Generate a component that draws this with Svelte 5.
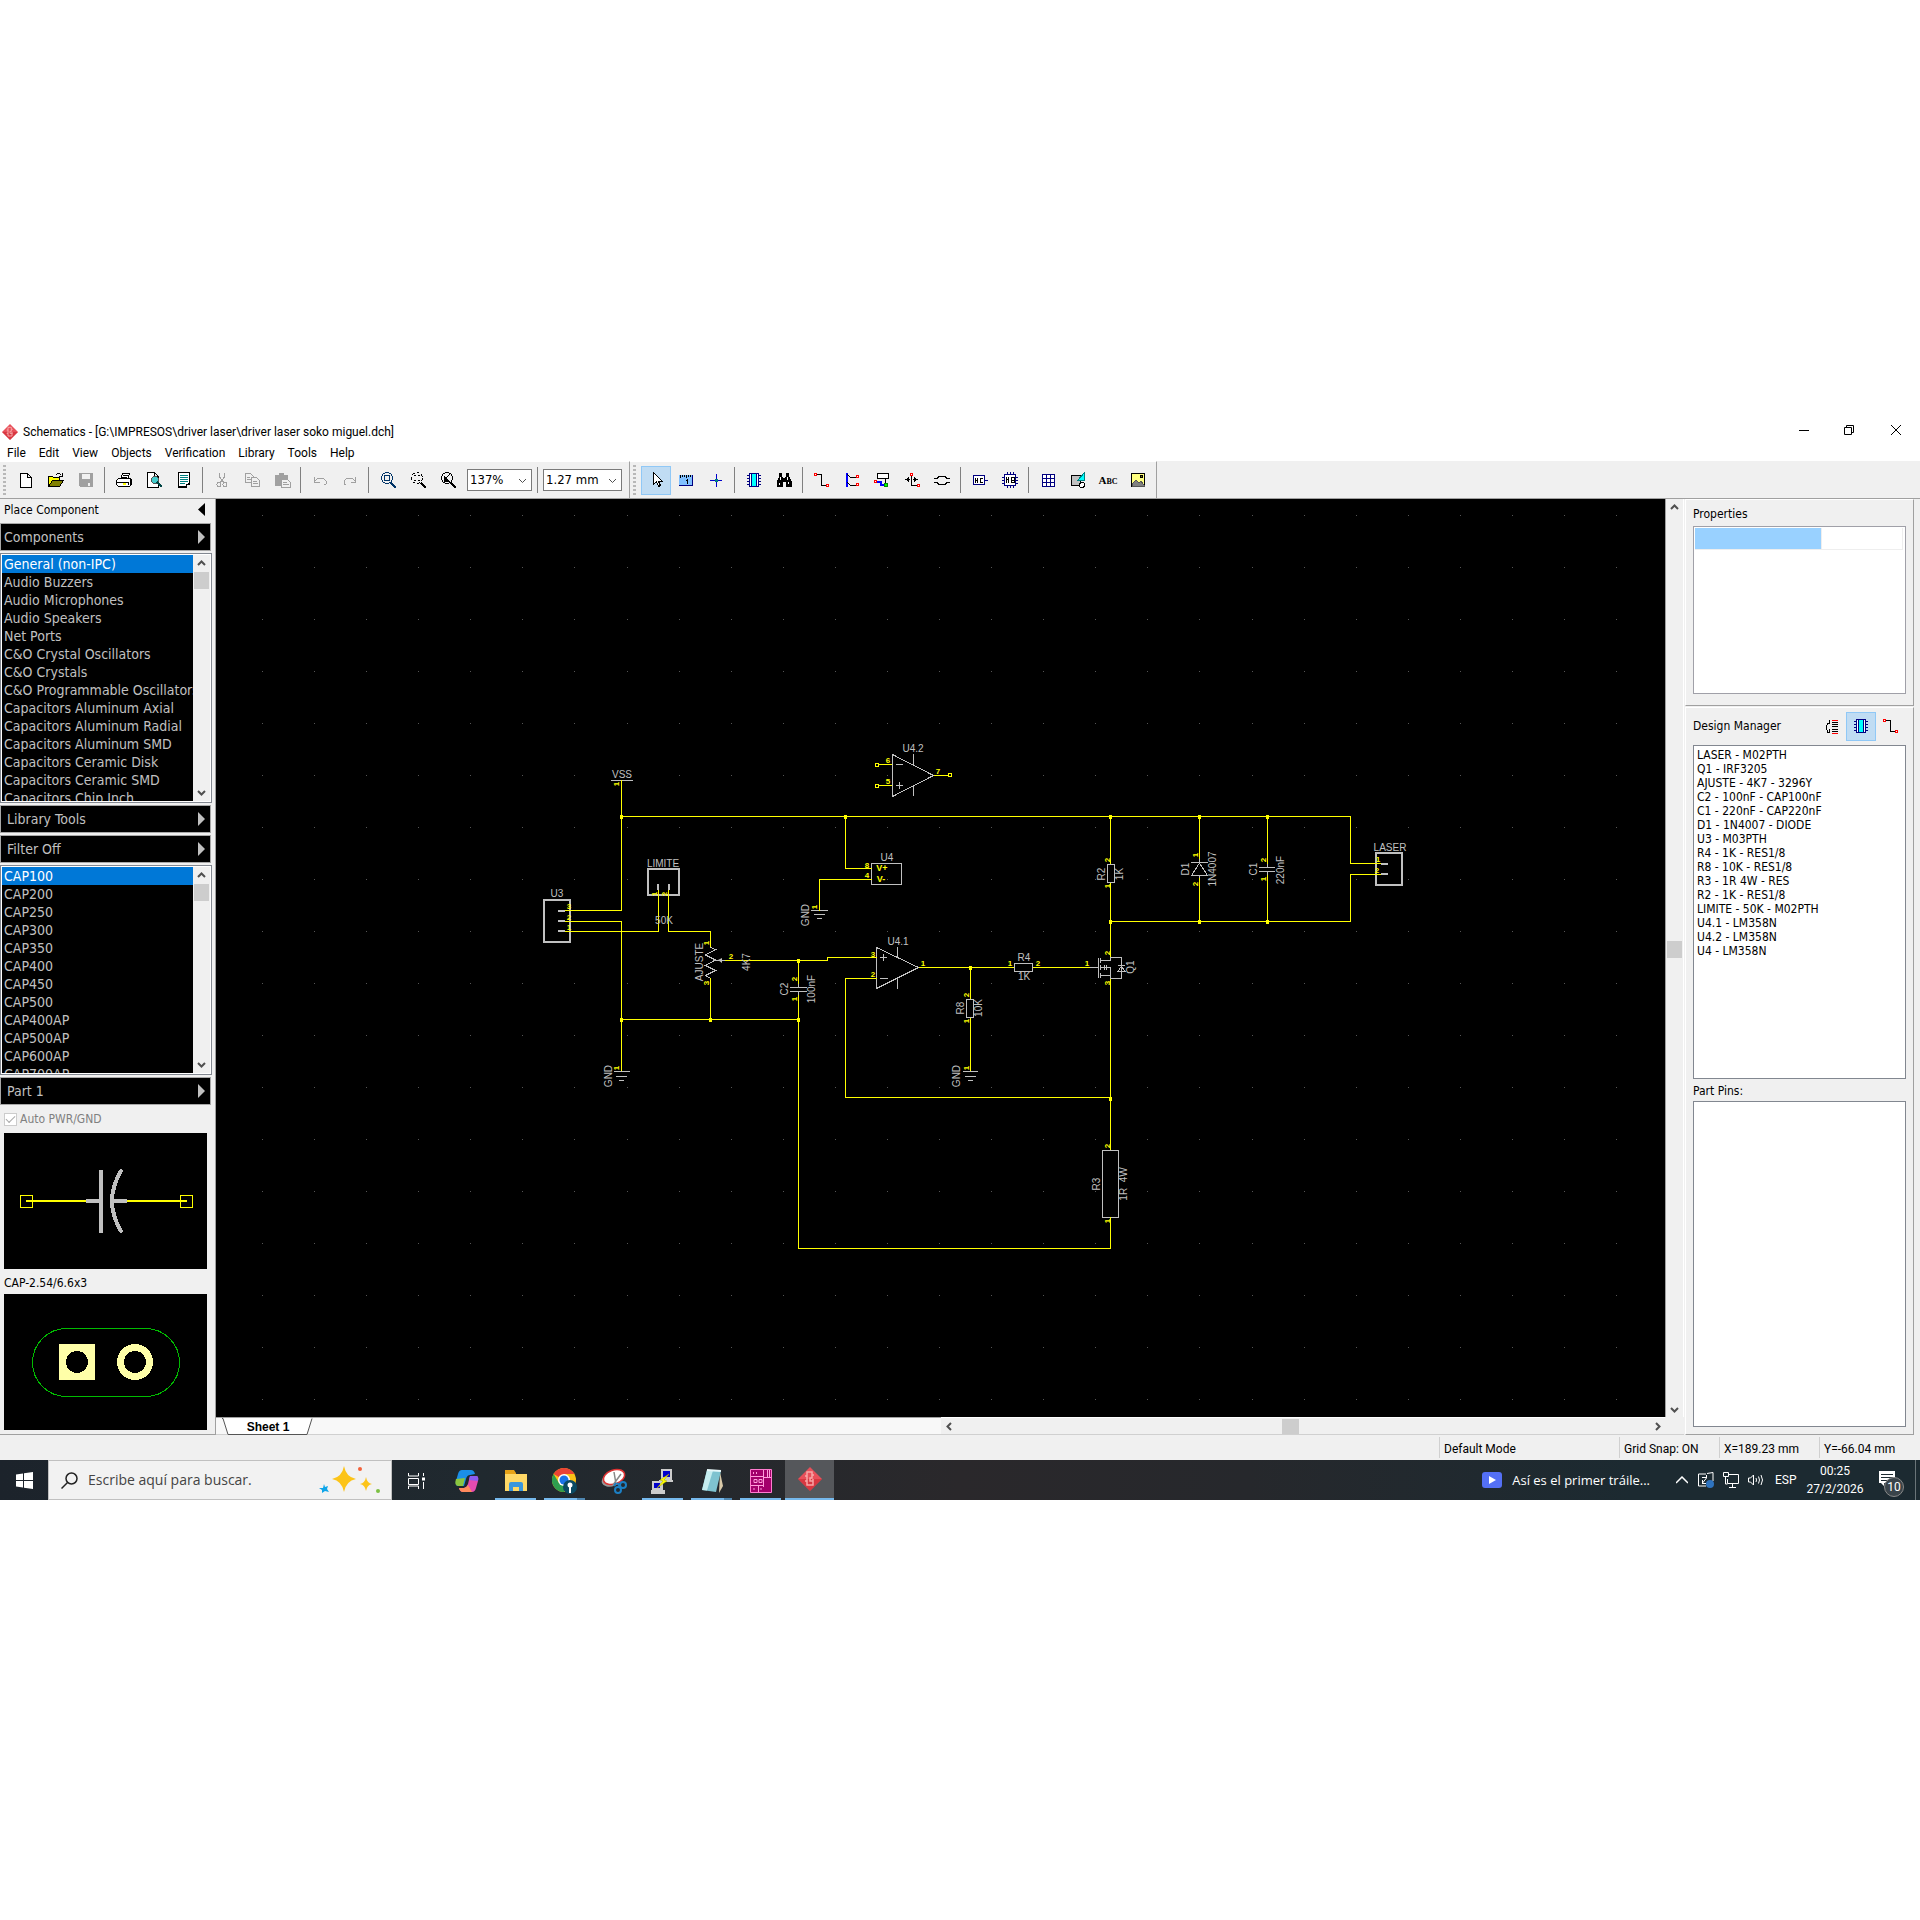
<script>
  const menus = ['File', 'Edit', 'View', 'Objects', 'Verification', 'Library', 'Tools', 'Help'];
  const libraries = [
    'General (non-IPC)', 'Audio Buzzers', 'Audio Microphones', 'Audio Speakers', 'Net Ports',
    'C&O Crystal Oscillators', 'C&O Crystals', 'C&O Programmable Oscillators',
    'Capacitors Aluminum Axial', 'Capacitors Aluminum Radial', 'Capacitors Aluminum SMD',
    'Capacitors Ceramic Disk', 'Capacitors Ceramic SMD', 'Capacitors Chip Inch'
  ];
  const components = [
    'CAP100', 'CAP200', 'CAP250', 'CAP300', 'CAP350', 'CAP400', 'CAP450', 'CAP500',
    'CAP400AP', 'CAP500AP', 'CAP600AP', 'CAP700AP'
  ];
  const parts = [
    'LASER - M02PTH', 'Q1 - IRF3205', 'AJUSTE - 4K7 - 3296Y', 'C2 - 100nF - CAP100nF',
    'C1 - 220nF - CAP220nF', 'D1 - 1N4007 - DIODE', 'U3 - M03PTH', 'R4 - 1K - RES1/8',
    'R8 - 10K - RES1/8', 'R3 - 1R 4W - RES', 'R2 - 1K - RES1/8', 'LIMITE - 50K - M02PTH',
    'U4.1 - LM358N', 'U4.2 - LM358N', 'U4 - LM358N'
  ];
  const tools = [
    ['new', 'open', 'save'], ['print', 'preview', 'report'], ['cut', 'copy', 'paste'],
    ['undo', 'redo'], ['zoomwin', 'zoomobj', 'zoomprev']
  ];
  const objectTools = [
    ['pointer', 'ruler', 'origin'], ['chip', 'find'], ['wire', 'bus', 'buscon', 'netport', 'hier'],
    ['hcon', 'hblock'], ['table', 'shape', 'text', 'picture']
  ];
  const apps = [
    { id: 'tasks' }, { id: 'copilot' }, { id: 'explorer', open: true },
    { id: 'chrome', open: true, multi: true }, { id: 'snip' }, { id: 'putty', open: true },
    { id: 'notepad', open: true, multi: true }, { id: 'pcb', open: true }, { id: 'schematic', active: true }
  ];

  const dots = [];
  for (let i = 0; i < 27; i++)
    for (let j = 0; j < 18; j++) dots.push(`M${262 + Math.round(i * 52.08)} ${515 + j * 52}h1v1h-1z`);
  const dotPath = dots.join('');

  const wires =
    'M621.5 780V910.5H565 M621.5 816.5H1350.5V863.5H1381 M845.5 816.5V868.5H871.5 M871.5 879.5H819.5V910.5' +
    'M658.5 890V931.5H565 M668.5 890V931.5H710.5V947 M565 921.5H621.5V1071 M621.5 1019.5H798.5' +
    'M710.5 978V1019.5 M725 960.5H827.5V957.5H876.5 M798.5 960V984 M798.5 995V1248.5H1110.5V1217' +
    'M876.5 978.5H845.5V1097.5H1110.5 M918.5 967.5H1014 M970.5 967V999 M970.5 1018V1071 M1033 967.5H1090' +
    'M1110.5 816V864 M1110.5 883V957 M1110.5 979V1150 M1110.5 921.5H1350.5V874.5H1381' +
    'M1199.5 816V859 M1199.5 878V921 M1267.5 816V864 M1267.5 875V921' +
    'M879 764.5H892 M879 785.5H892 M934 775.5H948 M875.5 763.5h3v3h-3z M875.5 784.5h3v3h-3z M948.5 773.5h3v3h-3z';
  const nodes = [
    [621, 816], [845, 816], [1110, 816], [1199, 816], [1267, 816], [621, 1019], [710, 1019], [798, 1019],
    [798, 960], [970, 967], [1110, 921], [1199, 921], [1267, 921], [1110, 1098]
  ];
  const symbols =
    'M611 780.5H633 M871.5 863.5H901.5V884.5H871.5z M811 910.5H828 M814 914.5H825 M817 918.5H822' +
    'M614 1071.5H630 M616 1076.5H627 M619 1080.5H624 M963 1071.5H978 M965 1076.5H976 M968 1080.5H973' +
    'M790 987.5H807 M790 991.5H807 M798.5 984V987 M798.5 992V995' +
    'M880 957.5H887 M883.5 954V961 M880 978.5H888 M897.5 947V957 M897.5 978V989' +
    'M896 764.5H903 M896 785.5H903 M899.5 782V789 M913.5 754V765 M913.5 786V796' +
    'M966.5 999.5H973.5V1017.5H966.5z M1014.5 963.5H1032.5V971.5H1014.5z M1107.5 864.5H1114.5V882.5H1107.5z' +
    'M1102.5 1150.5H1118.5V1217.5H1102.5z M1259 867.5H1275 M1259 871.5H1275 M1267.5 864V867 M1267.5 872V875' +
    'M1191 862.5H1208 M1199.5 859V862 M1199.5 876V878' +
    'M1090 967.5H1098 M1098.5 958V978 M1100.5 958V963 M1100.5 965V970 M1100.5 973V978 M1100 960.5H1110.5V957.5H1121.5V978.5H1110.5V967.5H1100 M1100 975.5H1110' +
    'M1118 965.5H1125 M1104.5 965V970 M1106.5 965V970';
  const slants =
    'M876.5 947.5L918.5 967.5L876.5 988.5z M892.5 754.5L933.5 775.5L892.5 796.5z' +
    'M1199.5 863L1191.5 875.5H1207.5z M1121.5 966L1118 971.5H1125z' +
    'M710.5 947.5L715.5 949.5L705.5 955L715.5 960L705.5 965.5L715.5 970.5L705.5 975.5L710.5 978.5 M713 960.5H725';
  const thick =
    'M648 869H679V895H648z M544 900H570V942H544z M1376 853H1402V885H1376z' +
    'M658 884V890 M669 884V890 M558 911H565 M558 921H565 M558 931H565 M1381 864H1388 M1381 874H1388';

  // x, baseline, text
  const names = [
    [622, 778, 'VSS'], [913, 752, 'U4.2'], [887, 861, 'U4'], [663, 867, 'LIMITE'], [557, 897, 'U3'],
    [664, 924, '50K'], [898, 945, 'U4.1'], [1024, 961, 'R4'], [1024, 980, '1K'], [1390, 851, 'LASER']
  ];
  const sideNames = [
    [809, 915, 'GND'], [612, 1076, 'GND'], [960, 1076, 'GND'], [703, 962, 'AJUSTE'], [750, 962, '4K7'],
    [788, 989, 'C2'], [815, 989, '100nF'], [964, 1008, 'R8'], [982, 1008, '10K'], [1105, 874, 'R2'],
    [1123, 874, '1K'], [1189, 869, 'D1'], [1216, 869, '1N4007'], [1257, 869, 'C1'], [1284, 870, '220nF'],
    [1134, 967, 'Q1'], [1100, 1184, 'R3'], [1127, 1184, '1R  4W']
  ];
  const pins = [
    [867, 868, '8'], [867, 878, '4'], [569, 909, '3'], [569, 920, '2'], [569, 930, '1'], [731, 959, '2'],
    [873, 957, '3'], [873, 977, '2'], [923, 966, '1'], [888, 763, '6'], [888, 784, '5'], [938, 774, '7'],
    [1010, 966, '1'], [1038, 966, '2'], [1087, 966, '1'], [1378, 862, '1'], [1377, 873, '2']
  ];
  const sidePins = [
    [619, 784, '1'], [619, 1068, '1'], [817, 907, '1'], [657, 894, '1'], [667, 894, '2'], [709, 943, '1'],
    [709, 983, '3'], [797, 979, '2'], [797, 999, '1'], [969, 995, '2'], [969, 1021, '1'], [969, 1068, '1'],
    [1110, 860, '2'], [1110, 886, '1'], [1110, 953, '2'], [1110, 983, '3'], [1110, 1146, '2'],
    [1110, 1221, '1'], [1198, 855, '1'], [1198, 884, '2'], [1266, 860, '2'], [1266, 879, '1']
  ];
</script>

{#snippet icon(id)}
  <svg class="icon" viewBox="0 0 18 18" width="18" height="18" shape-rendering="crispEdges" fill="none" stroke="#000" aria-hidden="true">
    {#if id === 'new'}
      <path fill="#fff" d="M3.5 2.5h7l4 4v10h-11z M10.5 2.5v4h4" />
    {:else if id === 'open'}
      <path fill="#ff0" d="M1.5 15.5v-10h4l1 1h6v3" /><path fill="#808000" d="M1.5 15.5l4-6h11l-4 6z" /><path d="M9 3.5h1M10 2.5h3M13 3.5h1M15.5 2v4M12 5.5h4" />
    {:else if id === 'save'}
      <path stroke="none" fill="#a0a0a0" d="M2 2h14v14H3l-1-1z" /><path stroke="none" fill="#f0f0f0" d="M5 3h8v5H5zM11 12h2v3h-2z" />
    {:else if id === 'print'}
      <path fill="#fff" d="M5.5 8.5l2-6h7l-2 6z M8 4.5h5M7 6.5h5" /><path fill="#fff" d="M1.5 9.5l2-2h12l1 1v5l-2 2h-11l-2-2z M2 11.5h12M13 14v-3M15 8v6" /><path stroke="#ff0" stroke-width="2" d="M8 13h3" />
    {:else if id === 'preview'}
      <path fill="#fff" d="M2.5 1.5h7l4 4v11h-11z M9.5 1.5v4h4" /><circle cx="10" cy="9" r="3.5" fill="#4cc" stroke="#555" /><path stroke="#044" stroke-width="2" d="M12 11l5 5" />
    {:else if id === 'report'}
      <path fill="#fff" d="M3.5 1.5h11v12h-3v3h-8z" /><path stroke="#008080" d="M5 4.5h8M5 6.5h8M5 8.5h8M5 10.5h8M5 12.5h5" stroke-width="1" /><path d="M3 15.5h8M14 12v2" stroke-width="2" />
    {:else if id === 'cut'}
      <path stroke="#a0a0a0" d="M6.500 2v4l4 5M11.500 2v4l-4 5" /><circle cx="6" cy="13.500" r="2" stroke="#a0a0a0" /><circle cx="12" cy="13.500" r="2" stroke="#a0a0a0" />
    {:else if id === 'copy'}
      <path stroke="#a0a0a0" d="M2.500 2.500h5l3 3v6h-8zM4 6.500h3M4 8.500h4" /><path stroke="#a0a0a0" fill="#f0f0f0" d="M8.500 6.500h5l3 3v6h-8zM10 10.500h4M10 12.500h5" />
    {:else if id === 'paste'}
      <path fill="#a0a0a0" stroke="none" d="M2 4h4V2h5v2h4v11H2z" /><path fill="#f0f0f0" stroke="#a0a0a0" d="M8.500 8.500h6l3 3v5h-9zM10 11.500h4M10 13.500h6" />
    {:else if id === 'undo'}
      <path stroke="#a0a0a0" d="M3.500 6v5h5M4 10l3-3h5l3 3v3l-2 1" />
    {:else if id === 'redo'}
      <path stroke="#a0a0a0" d="M14.500 6v5h-5M14 10l-3-3H6L3 10v3l2 1" />
    {:else if id.startsWith('zoom')}
      <circle cx="8" cy="7" r="5.500" stroke={id === 'zoomwin' ? '#036' : '#000'} stroke-dasharray={id === 'zoomobj' ? '3 2' : 'none'} />
      <path stroke={id === 'zoomwin' ? '#036' : '#000'} stroke-width="2" d="M12 12l5 5" />
      {#if id === 'zoomwin'}<path d="M5.500 4.500h5v5h-5z" stroke="#036" />{/if}
      {#if id === 'zoomobj'}<path d="M5 4.500h2M9 4.500h2M5 9.500h2M9 9.500h2" />{/if}
      {#if id === 'zoomprev'}<path fill="#000" d="M5 10V5l5 5zM7 7l5-5" />{/if}
    {:else if id === 'pointer'}
      <path fill="#fff" d="M6.500 1.500v12l3-3 2 5 2-1-2-4h4z" />
    {:else if id === 'ruler'}
      <path fill="#80c0ff" stroke="none" d="M2 4h14v11H2z" /><path stroke="#000080" d="M2 14.500h14M15.500 4v11" /><path d="M3.500 4v3M5.500 4v2M7.500 4v2M9.500 4v3M11.500 4v2M13.500 4v2M10.500 8v5M9 9.500h2" />
    {:else if id === 'origin'}
      <path stroke="#00c" d="M3 9.500h12M9.500 3v13" /><path fill="#008080" stroke="none" d="M8 8h3v3H8z" />
    {:else if id === 'chip'}
      <path stroke="#000080" d="M2 4.500h14M2 7.500h14M2 10.500h14M2 13.500h14" /><path fill="#fff" stroke="#000080" d="M4.500 2.500h9v13h-9z" /><path stroke="none" fill="#0ff" d="M7 3h4v12H7z" /><path stroke="#000080" d="M6.500 3v12M11.500 3v12" />
    {:else if id === 'find'}
      <path fill="#000" d="M4.500 2.500h2v3l2 2h1l2-2v-3h2v3l3 5v5h-5v-5h-4v5h-5v-5l2-5z" /><path stroke="#fff" d="M5.500 6v3M12.500 6v3M4 11.500v2M13.500 11v2" />
    {:else if id === 'wire'}
      <path d="M4 3.500h4.500v11H14" /><path stroke="red" d="M1.500 2.500h2v2h-2zM13.500 13.500h2v2h-2z" fill="#fff" />
    {:else if id === 'bus'}
      <path stroke="#00f" stroke-width="2" d="M4 2v14" /><path d="M4 3l3 3h7M4 11l3 3h7" /><path stroke="red" fill="#fff" d="M13.500 4.500h2v2h-2zM13.500 12.500h2v2h-2z" />
    {:else if id === 'buscon'}
      <path fill="#fff" d="M4.500 2.500h11v5h-11zM12.500 8v5" /><path stroke="#00f" stroke-width="2" d="M4 11h4v3h4" /><path stroke="red" fill="#fff" d="M1.500 9.500h2v2h-2z" /><circle cx="13" cy="14" r="2" fill="#0f0" stroke="#080" />
    {:else if id === 'netport'}
      <path d="M8.500 5v9.500H14M2 8.500h5M10 8.500h5M5.500 6v5M11.500 6v5M4.500 7v3M12.500 7v3" /><path stroke="red" fill="#fff" d="M7.500 2.500h2v2h-2zM14.500 13.500h2v2h-2z" />
    {:else if id === 'hier'}
      <path d="M1 7.500h3M1 11.500h3M14 7.500h3M14 11.500h3M4 7.500l2-2h6l2 2M4 11.500l2 2h6l2-2" />
    {:else if id === 'hcon'}
      <path fill="#fff" stroke="#000080" d="M2.500 4.500h11v9h-11zM14 9.500h3" /><path d="M4.500 7v5M6.500 7v5M4 9.500h3M9.500 7v5M10 7.500h2M10 11.500h2" />
    {:else if id === 'hblock'}
      <path stroke="#000080" d="M6.500 1v16M9.500 1v16M12.500 1v16M1 6.500h16M1 9.500h16M1 12.500h16" /><path fill="#fff" stroke="#000080" d="M3.500 3.500h11v11h-11z" /><path d="M5.500 6v6M7.500 6v6M5 8.500h3M10.500 6v6M10 6.500h3v5h-3M10 9.500h3" />
    {:else if id === 'table'}
      <path fill="#fff" stroke="#000080" d="M3.500 3.500h12v12h-12zM3 7.500h13M3 11.500h13M7.500 3v13M11.500 3v13" />
    {:else if id === 'shape'}
      <path fill="#c0c0c0" d="M2.500 4.500h9v10h-9z" /><path fill="#0ff" stroke="#008080" d="M15.500 1.500v8h-7z" /><circle cx="13" cy="14" r="2.500" fill="#fff" />
    {:else if id === 'picture'}
      <path fill="#ffff80" d="M2.500 2.500h13v13h-13z" /><path fill="#808080" stroke="#555" d="M3 15v-2l4-4 3 3 2-2 3 4v1z" /><path fill="#808000" d="M11.500 4.500h2v2h-2z" />
    {:else if id === 'refresh'}
      <path d="M10 5.500h6M10 7.500h6M10 9.500h6M10 12.500h6M10 14.500h6M7.500 3v4M5 6.500h3M5.500 6v2M4.500 8v5M5.500 13v2M5 15.500h3M7.500 12v4" /><path stroke="red" d="M10 3.500h6M10 16.500h6" />
    {/if}
  </svg>
{/snippet}

{#snippet toolButton(id, active)}
  <button class="tool" class:active aria-label={id}>
    {#if id === 'text'}<span class="abc">Abc</span>{:else}{@render icon(id)}{/if}
  </button>
{/snippet}

{#snippet chevron(dir)}
  <svg class="chev {dir}" viewBox="0 0 9 9" width="9" height="9" aria-hidden="true"><path d="M1 6l3.500-3.500L8 6" fill="none" stroke="#505050" /></svg>
{/snippet}

{#snippet logo(size)}
  <svg viewBox="0 0 24 24" width={size} height={size} aria-hidden="true">
    <path d="M12 0L24 12L12 24L0 12z" fill="#e8505a" /><path d="M0 12h24L12 24z" fill="#c81e28" opacity=".5" />
    <path d="M9 5h5v6h-2v3h3v4H9zM9 9h-2M9 14H7M14 8h2M15 12v3" fill="none" stroke="#f7a5a5" stroke-width="1.500" />
  </svg>
{/snippet}

{#snippet listBox(items, label)}
  <div class="listbox">
    <ul aria-label={label}>
      {#each items as item, i}<li class:selected={i === 0}>{item}</li>{/each}
    </ul>
    <div class="vbar">{@render chevron('up')}<span class="thumb"></span><span class="fill"></span>{@render chevron('down')}</div>
  </div>
{/snippet}

<div class="window">
  <header class="titlebar">
    {@render logo(16)}
    <h1>Schematics - [G:\IMPRESOS\driver laser\driver laser soko miguel.dch]</h1>
    <div class="winbtns">
      <button aria-label="Minimize"><svg width="12" height="12"><path d="M1 6.500h10" stroke="#000" /></svg></button>
      <button aria-label="Restore"><svg width="12" height="12" fill="none" stroke="#000"><path d="M1.500 3.500h7v7h-7zM3.500 3.500v-2h7v7h-2" /></svg></button>
      <button aria-label="Close"><svg width="12" height="12"><path d="M1 1l10 10M11 1L1 11" stroke="#000" /></svg></button>
    </div>
  </header>
  <nav class="menubar">{#each menus as m}<button>{m}</button>{/each}</nav>

  <div class="toolbars">
    <div class="toolbar">
      <span class="grip"></span>
      {#each tools as group, i}
        {#if i}<span class="sep"></span>{/if}
        {#each group as t}{@render toolButton(t, false)}{/each}
      {/each}
      <label class="combo zoom"><select aria-label="Zoom"><option>137%</option></select>{@render chevron('down')}</label>
      <span class="sep"></span>
      <label class="combo grid"><select aria-label="Grid"><option>1.27 mm</option></select>{@render chevron('down')}</label>
    </div>
    <div class="toolbar">
      <span class="grip"></span>
      {#each objectTools as group, i}
        {#if i}<span class="sep"></span>{/if}
        {#each group as t}{@render toolButton(t, t === 'pointer')}{/each}
      {/each}
    </div>
  </div>

  <main class="work">
    <aside class="left">
      <div class="place"><span>Place Component</span><svg width="7" height="13"><path d="M7 0v13L0 6.500z" /></svg></div>
      <button class="bar first"><span>Components</span><i></i></button>
      {@render listBox(libraries, 'Libraries')}
      <button class="bar"><span>Library Tools</span><i></i></button>
      <button class="bar"><span>Filter Off</span><i></i></button>
      <div class="short">{@render listBox(components, 'Components')}</div>
      <button class="bar"><span>Part 1</span><i></i></button>
      <label class="check"><input type="checkbox" checked disabled /><span>Auto PWR/GND</span></label>
      <svg class="preview" viewBox="4 1133 203 136" fill="none" shape-rendering="crispEdges" role="img" aria-label="Symbol">
        <path stroke="#ff0" d="M20.500 1195.500h12v12h-12zM180.500 1195.500h12v12h-12z" />
        <path stroke="#ff0" stroke-width="2" d="M26 1201h61M126 1201h61" />
        <path stroke="silver" stroke-width="4" d="M86 1201h15M112 1201h15M101 1170v63" />
        <path stroke="silver" stroke-width="4" stroke-linecap="round" d="M121 1171q-18 30 0 60" />
      </svg>
      <p class="package">CAP-2.54/6.6x3</p>
      <svg class="preview" viewBox="4 1294 203 136" shape-rendering="crispEdges" role="img" aria-label="Pattern">
        <rect x="32.500" y="1328.500" width="147" height="68" rx="34" fill="none" stroke="#0b0" />
        <path fill="#ffffa8" d="M59 1344h36v36H59z" /><circle cx="135" cy="1362" r="18" fill="#ffffa8" />
        <circle cx="77" cy="1362" r="11" /><circle cx="135" cy="1362" r="11" />
      </svg>
    </aside>

    <section class="center">
      <div class="viewport">
        <svg class="sheet" role="img" aria-label="Schematic">
          <g transform="translate(-216 -499)">
            <path d={dotPath} fill="#555" shape-rendering="crispEdges" />
            <g fill="none" stroke="silver">
              <path d={symbols} shape-rendering="crispEdges" />
              <path d={slants} shape-rendering="crispEdges" />
              <path d={thick} stroke-width="2" shape-rendering="crispEdges" />
            </g>
            <path d={wires} fill="none" stroke="#ff0" shape-rendering="crispEdges" />
            <path d="M718 960l4-2v5z" fill="silver" />
            {#each nodes as [x, y]}<rect x={x - 1} y={y - 1} width="3" height="4" fill="#ff0" />{/each}
            {#each names as [x, y, t]}<text {x} {y}>{t}</text>{/each}
            {#each sideNames as [x, y, t]}<text {x} {y} transform="rotate(-90 {x} {y})">{t}</text>{/each}
            {#each pins as [x, y, t]}<text class="pin" {x} {y}>{t}</text>{/each}
            {#each sidePins as [x, y, t]}<text class="pin" {x} {y} transform="rotate(-90 {x} {y})">{t}</text>{/each}
            <text class="volt" x="882" y="871">V+</text>
            <text class="volt" x="881" y="882">V-</text>
          </g>
        </svg>
        <div class="vbar main">{@render chevron('up')}<span class="fill"></span><span class="thumb"></span><span class="fill low"></span>{@render chevron('down')}</div>
      </div>
      <div class="bottom">
        <div class="tabs">
          <button class="tab"><svg width="92" height="18" aria-hidden="true"><path d="M0 .5h1l5 16h79l5-16" fill="#fff" stroke="#555" /></svg><span>Sheet 1</span></button>
        </div>
        <div class="hbar">{@render chevron('left')}<span class="fill"></span><span class="thumb"></span><span class="fill low"></span>{@render chevron('right')}</div>
      </div>
    </section>

    <aside class="right">
      <section class="props">
        <h2>Properties</h2>
        <div class="box"><div class="row"><span></span><span></span></div></div>
      </section>
      <section class="manager">
        <div class="head"><h2>Design Manager</h2>{@render toolButton('refresh', false)}{@render toolButton('chip', true)}{@render toolButton('wire', false)}</div>
        <ul class="box">{#each parts as p}<li>{p}</li>{/each}</ul>
        <h2 class="pinhead">Part Pins:</h2>
        <div class="box pinbox"></div>
      </section>
    </aside>
  </main>

  <footer class="status">
    <span class="mode">Default Mode</span><span>Grid Snap: ON</span><span>X=189.23 mm</span><span>Y=-66.04 mm</span>
  </footer>

  <div class="taskbar">
    <button class="start" aria-label="Start"><svg width="17" height="17" fill="#fff"><path d="M0 2.500l7-1V8H0zM8 1.300L17 0v8H8zM0 9h7v6.500l-7-1zM8 9h9v8l-9-1.300z" /></svg></button>
    <label class="search">
      <svg width="17" height="17" fill="none" stroke="#222" stroke-width="1.500"><circle cx="10.500" cy="6.500" r="5.500" /><path d="M6.500 10.500L.5 16.500" /></svg>
      <input aria-label="Buscar" placeholder="Escribe aquí para buscar." />
      <svg width="66" height="28" viewBox="0 0 66 28"><path fill="#fcc419" d="M28 0q2 11 12 13-10 2-12 13-2-11-12-13 10-2 12-13z" /><path fill="#fcc419" d="M50 11q1 6 6 7-5 1-6 7-1-6-6-7 5-1 6-7z" /><path fill="#0ea5e9" d="M8 18l1 3 3-1-1 3 2 3-4-1-3 2v-3l-3-2h4z" /><circle cx="44" cy="3" r="2" fill="#f4623a" /><circle cx="62" cy="25" r="2" fill="#7bc043" /></svg>
    </label>
    <div class="apps">
      {#each apps as a}
        <button class:open={a.open} class:multi={a.multi} class:current={a.active} aria-label={a.id}>
          {#if a.id === 'schematic'}{@render logo(24)}{:else}
          <svg width="26" height="26" viewBox="0 0 26 26" fill="none" aria-hidden="true">
            {#if a.id === 'tasks'}
              <path stroke="#fff" d="M3.500 5v3h10V5M3.500 10.500h10v6h-10zM3.500 21v-3h10v3M18.500 5v3M18.500 14v7" /><path fill="#fff" d="M17 9.500h3v3h-3z" />
            {:else if a.id === 'copilot'}
              <path fill="#1a8fe8" d="M8 2h9q3 0 4 4l-5 1q-3 0-4 4l-2 7H4q-3 0-2-5l2-7q1-4 4-4z" /><path fill="#8bc53f" d="M2 11l9-1-2 8H4q-4-1-2-7z" /><path fill="#e54bb0" d="M18 24H9q-3 0-4-4h5q3-1 4-4l2-8h6q3 0 2 5l-2 7q-1 4-4 4z" /><path fill="#ff8a5c" d="M18 24H9q-3 0-4-4h5q3-1 4-3z" /><path fill="#8c5cf0" d="M16 8h6q3 0 2 5l-9-1z" />
            {:else if a.id === 'explorer'}
              <path fill="#e8a317" d="M2 2h9l2 3v4H2z" /><path fill="#ffd866" d="M2 6h22v17H2z" /><path fill="#3a96dd" d="M6 23v-7q0-2 2-2h10q2 0 2 2v7h-4v-4h-6v4z" />
            {:else if a.id === 'chrome'}
              <circle cx="12" cy="12" r="12" fill="#fbc116" /><path fill="#ea4335" d="M12 12L1.600 6A12 12 0 0 1 22.400 6H12z" /><path fill="#2e9e4f" d="M1.600 6A12 12 0 0 0 12 24l5-9-10 0z" /><circle cx="12" cy="12" r="6" fill="#fff" /><circle cx="12" cy="12" r="4.500" fill="#1a73e8" /><circle cx="18" cy="19" r="7" fill="#0b4a63" /><circle cx="18" cy="17" r="2.500" fill="#fff" /><path stroke="#fff" stroke-width="2" d="M18 18v7" />
            {:else if a.id === 'snip'}
              <ellipse cx="12" cy="11" rx="11" ry="7" transform="rotate(-20 12 13)" fill="#999" /><ellipse cx="13" cy="9" rx="11" ry="7" transform="rotate(-20 13 9)" fill="#fff" stroke="#d33" stroke-width="1.500" /><path stroke="#888" d="M13 4l2 12M20 6l-8 11" stroke-width="1.500" /><path stroke="#1c7fc4" stroke-width="2" d="M15 15l-2 3M16 15l3 3" /><circle cx="17" cy="22" r="3" stroke="#1c7fc4" stroke-width="2" /><circle cx="22" cy="17" r="3" stroke="#1c7fc4" stroke-width="2" />
            {:else if a.id === 'putty'}
              <path fill="#ccc" d="M11 1h11v11H11zM9 12h14v2H9zM2 13h11v9H2zM1 22h14v4H1z" /><path fill="#00c" d="M13 3h7v6h-7zM4 15h6v5H4z" /><path fill="#ff0" stroke="#aa0" stroke-width=".5" d="M19 6l-9 6 3 1-6 7 10-7-3-1z" />
            {:else if a.id === 'notepad'}
              <path fill="#d9c9a8" d="M21 4l3 14-4 7z" /><path fill="#7fc3d0" d="M8 2l14 1-5 21-14-2z" /><path fill="#c5edf0" d="M8 2l6 .5-6 20-5-.5z" /><path stroke="#e8f8fa" d="M8 2l14 1" stroke-width="2" />
            {:else if a.id === 'pcb'}
              <path fill="#a3006b" stroke="#ff7ccf" d="M2.500 1.500h21v23h-21z" /><path stroke="#ff9ddb" d="M3 8.500h13M15.500 2v17M3 17.500h13M19.500 2v7M16 9.500h7M21.500 2v7M10.500 18v6M5.500 4v2M8.500 4v2M6 20v2M13 20v2M6 11.500h3v3H6zM11 11.500h3v3h-3z" />
            {/if}
          </svg>{/if}
        </button>
      {/each}
    </div>
    <div class="tray">
      <button class="news"><svg width="20" height="18" aria-hidden="true"><rect y="1" width="20" height="16" rx="3" fill="#5470f5" /><path d="M7 5l7 4-7 4z" fill="#fff" /></svg><span>Así es el primer tráile...</span></button>
      <svg class="t1" width="12" height="8" fill="none" stroke="#fff"><path d="M0 7l6-6 6 6" stroke-width="1.500" /></svg>
      <svg class="t2" width="18" height="18" fill="none" stroke="#fff"><path d="M9 3H1.500v12H9M10 2.500l6-1V10M5 6.500h4.500M9.500 4v3L5.500 12M5 12.500h4M5.500 9v4" /><circle cx="13" cy="13" r="4" fill="#2f74c0" stroke="none" /></svg>
      <svg class="t3" width="18" height="18" fill="none" stroke="#fff"><path d="M7 3.500h9.500v9H5.500V8M1.500 1.500h5v4h-5zM3.500 6v7h2M10.500 13v3M7 16.500h7" /></svg>
      <svg class="t4" width="18" height="18" fill="none" stroke="#fff"><path d="M1.500 7v4h2l3 3V4l-3 3zM9 7q1 2 0 4M11.500 5.500q2 3.500 0 7M14 4q3 5 0 10" /></svg>
      <span class="lang">ESP</span>
      <div class="clock"><span>00:25</span><span>27/2/2026</span></div>
      <button class="notes" aria-label="Notificaciones"><svg width="17" height="15"><path d="M0 0h16v12H5v3l-3-3H0z" fill="#fff" /><path d="M2 3.500h12M2 6.500h12M2 9.500h6" stroke="#1c2a31" /></svg><span>10</span></button>
      <span class="peek"></span>
    </div>
  </div>
</div>

<style>
  :global(body) { background: #fff; }
  * { box-sizing: border-box; }
  button, input, select { font: inherit; color: inherit; border: 0; background: none; padding: 0; margin: 0; border-radius: 0; }
  ul, h1, h2, p { margin: 0; padding: 0; font: inherit; list-style: none; }
  svg { display: block; flex: none; }
  .window { --tahoma: "DejaVu Sans Condensed", "Noto Sans", sans-serif; padding-top: 420px; font: 12px/16px Roboto, "Open Sans", sans-serif; color: #000; }
  .titlebar { display: flex; align-items: center; height: 24px; padding-left: 2px; gap: 5px; }
  .titlebar h1 { flex: 1; }
  .winbtns { display: flex; align-self: flex-start; }
  .winbtns button { width: 45px; height: 20px; display: grid; place-items: center; }
  .winbtns button:last-child { width: 49px; }
  .menubar { display: flex; height: 17px; gap: 13px; padding: 0 7px; }
  .toolbars { display: flex; height: 38px; background: #f0f0f0; border-bottom: 1px solid #a0a0a0; }
  .toolbar { display: flex; align-items: center; border-right: 1px solid #a0a0a0; border-top: 1px solid #fff; padding: 0 3px 0 1px; }
  .toolbar:first-child { padding-right: 7px; }
  .grip { width: 3px; height: 30px; margin: 0 5px 0 2px; background: repeating-linear-gradient(#b8b8b8 0 2px, transparent 2px 4px); }
  .sep { width: 8px; height: 26px; background: linear-gradient(90deg, transparent 3px, #808080 3px 4px, transparent 4px); }
  .tool { width: 30px; height: 29px; display: grid; place-items: center; border: 1px solid transparent; }
  .tool.active { background: #c0dcf3; border-color: #90c8f6; }
  .abc { font: 11px/12px "Liberation Serif", serif; font-variant: small-caps; font-weight: bold; }
  .combo { display: flex; align-items: center; height: 22px; padding: 0 4px 0 2px; background: #fff; border: 1px solid #7a7a7a; font: 13px/18px var(--tahoma); }
  .combo select { appearance: none; flex: 1; min-width: 0; }
  .zoom { width: 65px; margin: 0 2px 0 4px; }
  .grid { width: 79px; margin-left: 1px; }
  .chev.down { transform: rotate(180deg); }
  .chev.left { transform: rotate(-90deg); }
  .chev.right { transform: rotate(90deg); }
  .vbar .chev path, .hbar .chev path { stroke-width: 2; }

  .work { display: flex; background: #f0f0f0; height: 936px; }
  aside.left { width: 216px; flex: none; border-right: 1px solid #a0a0a0; border-bottom: 1px solid #a0a0a0; padding-right: 3px; }
  .place { display: flex; justify-content: space-between; align-items: center; height: 24px; padding: 0 7px 3px 4px; font: 12px/16px var(--tahoma); }
  .bar { display: flex; justify-content: space-between; align-items: center; width: 211px; height: 28px; margin-top: 2px; padding: 0 5px 0 6px; background: #000; color: silver; border: 1px solid #a8a8a8; font: 14px/18px var(--tahoma); }
  .bar.first { margin-top: 0; padding-left: 3px; }
  .bar i { border-left: 7px solid silver; border-top: 7px solid transparent; border-bottom: 7px solid transparent; }
  .listbox { display: flex; height: 250px; width: 212px; margin-top: 2px; border: 1px solid #828790; padding: 1px; background: #fff; font: 14px/18px var(--tahoma); }
  .short .listbox { height: 210px; }
  .listbox ul { flex: 1; overflow: hidden; background: #000; color: silver; }
  .listbox li { padding-left: 2px; height: 18px; white-space: nowrap; }
  .listbox li.selected { background: #0078d7; color: #fff; }
  .vbar { width: 17px; display: flex; flex-direction: column; align-items: center; background: #f0f0f0; padding: 4px 0; }
  .vbar .thumb { width: 15px; height: 17px; background: #cdcdcd; margin-top: 4px; }
  .fill { flex: 1; }
  .check { display: flex; align-items: center; gap: 3px; padding-left: 4px; height: 28px; color: #808080; font: 12px/16px var(--tahoma); }
  .check input { appearance: none; width: 13px; height: 13px; border: 1px solid #ccc; background: #fff; display: grid; place-items: center; }
  .check input::before { content: ""; width: 8px; height: 4px; border-left: 1px solid #aaa; border-bottom: 1px solid #aaa; transform: rotate(-45deg) translate(1px, -1px); }
  .preview { width: 203px; height: 136px; margin-left: 4px; background: #000; }
  .package { height: 25px; padding: 6px 4px 0; font: 12px/16px var(--tahoma); }

  .center { flex: 1; min-width: 0; display: flex; flex-direction: column; }
  .viewport { flex: 1; display: flex; min-height: 0; }
  .sheet { flex: 1; min-width: 0; height: 100%; background: #000; overflow: hidden; }
  .sheet text { font: 10px "Liberation Sans", sans-serif; fill: silver; text-anchor: middle; white-space: pre; }
  .sheet text.pin { font-size: 8px; font-weight: bold; fill: #ff0; }
  .sheet text.volt { font-size: 9px; font-weight: bold; fill: #ff0; }
  .vbar.main { width: 19px; border-left: 1px solid #a0a0a0; border-right: 1px solid #fff; padding: 4px 0 3px; }
  .vbar.main .thumb { margin: 0; }
  .vbar.main .low { flex-grow: 1.040; }
  .bottom { display: flex; height: 18px; padding-right: 19px; border-bottom: 1px solid #d0d0d0; }
  .tabs { flex: 1; background: #f8f8f8; border-top: 1px solid #a0a0a0; padding-left: 6px; }
  .tab { display: grid; place-items: center; height: 17px; overflow: hidden; font: bold 12px/16px "Liberation Sans", sans-serif; }
  .tab > * { grid-area: 1 / 1; }
  .hbar { width: 724px; display: flex; align-items: center; padding: 0 3px 0 4px; border-top: 1px solid #fff; }
  .hbar .thumb { width: 17px; height: 15px; background: #cdcdcd; }
  .hbar .fill { flex-grow: 328; }
  .hbar .low { flex-grow: 355; }

  aside.right { width: 236px; flex: none; display: flex; flex-direction: column; padding: 0 6px 0 1px; font: 12px/14px var(--tahoma); }
  aside.right section { border: 1px solid; border-color: #fff #a0a0a0 #a0a0a0 #fff; padding: 0 7px; }
  .props { height: 207px; }
  .props h2 { padding: 7px 0 5px; }
  .box { height: 168px; border: 1px solid #a0a0a8; background: #fff; padding: 1px; }
  .row { display: grid; grid-template-columns: 127px 1fr; height: 22px; padding-right: 1px; }
  .row span { border-bottom: 1px solid #eee; border-right: 1px solid #eee; }
  .row span:first-child { background: #99d1ff; }
  .manager { flex: 1; display: flex; flex-direction: column; margin-top: 1px; }
  .head { display: flex; align-items: center; height: 37px; padding-bottom: 1px; }
  .head h2 { flex: 1; }
  .manager ul.box { height: 334px; padding: 2px 3px; border-color: #828790; }
  .pinhead { padding: 5px 0 3px; }
  .manager .pinbox { flex: 1; margin-bottom: 7px; border-color: #828790; }

  .status { display: flex; justify-content: flex-end; height: 25px; background: #f0f0f0; padding: 2px 1px 2px 0; }
  .status span { width: 100px; padding: 4px 4px 0; border-left: 1px solid #d0d0d0; white-space: nowrap; }
  .status .mode { width: 180px; }

  .taskbar { display: flex; height: 40px; color: #fff; background: linear-gradient(90deg, #1c232b, #20292f 25%, #2a282b 50%, #26282c 65%, #1c2a31 85%); }
  .start { width: 48px; display: grid; place-items: center; }
  .search { width: 344px; display: flex; align-items: center; padding: 0 9px 0 12px; gap: 10px; background: #f2f2f2; border: 1px solid #c0c0c0; color: #333; font: 14px/20px "Open Sans", sans-serif; }
  .search input { flex: 1; min-width: 0; outline: 0; }
  .search input::placeholder { color: #444; opacity: 1; }
  .apps { display: flex; padding-left: 1px; }
  .apps button { width: 49px; display: grid; place-items: center; border: 4px solid transparent; border-width: 2px 4px 0; background-clip: padding-box; }
  .apps .open { background: linear-gradient(#76b9ed, #76b9ed) bottom / 100% 2px no-repeat padding-box; }
  .apps .multi { background: linear-gradient(90deg, #76b9ed 80%, #4f86b0 80%) bottom / 100% 2px no-repeat padding-box; }
  .apps .current { border: 0; background: #55575b; border-bottom: 2px solid #76b9ed; }
  .tray { margin-left: auto; display: flex; align-items: center; }
  .news { display: flex; align-items: center; gap: 10px; font: 13px/18px "Open Sans", sans-serif; margin-right: 26px; }
  .t1 { margin-right: 9px; }
  .t2, .t3 { margin-right: 7px; }
  .t4 { margin-right: 10px; }
  .lang { width: 24px; }
  .clock { width: 72px; text-align: center; line-height: 18px; }
  .clock span { display: block; }
  .notes { position: relative; width: 44px; height: 40px; padding: 0 0 4px 8px; }
  .notes span { position: absolute; left: 13px; top: 17px; width: 20px; height: 20px; border-radius: 50%; background: #3a444a; border: 1px solid #888; font-size: 12px; line-height: 18px; text-align: center; }
  .peek { width: 5px; height: 40px; border-left: 1px solid #6a7478; }
</style>
